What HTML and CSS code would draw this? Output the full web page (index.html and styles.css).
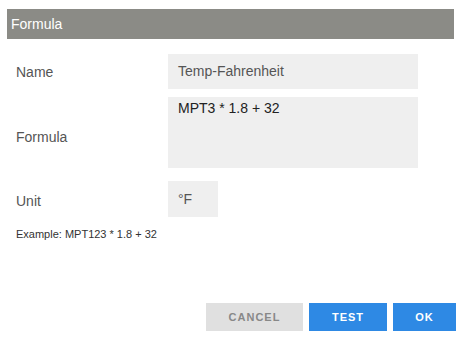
FILE: index.html
```html
<!DOCTYPE html>
<html>
<head>
<meta charset="utf-8">
<link rel="stylesheet" href="styles.css">
</head>
<body>
<div class="dialog">
  <div class="header">Formula</div>
  <div class="body">
    <div class="row row-name">
      <div class="label">Name</div>
      <div class="field field-name">Temp-Fahrenheit</div>
    </div>
    <div class="row row-formula">
      <div class="label label-formula">Formula</div>
      <div class="field field-formula">MPT3 * 1.8 + 32</div>
    </div>
    <div class="row row-unit">
      <div class="label label-unit">Unit</div>
      <div class="field field-unit">°F</div>
    </div>
    <div class="example">Example: MPT123 * 1.8 + 32</div>
  </div>
  <div class="actions">
    <button class="btn btn-cancel">CANCEL</button>
    <button class="btn btn-primary btn-test">TEST</button>
    <button class="btn btn-primary btn-ok">OK</button>
  </div>
</div>
</body>
</html>
```

FILE: styles.css
```css
* { box-sizing: border-box; }
html, body { margin: 0; padding: 0; background: #fff; }
body {
  font-family: "Liberation Sans", Arial, sans-serif;
  font-size: 14px;
  color: #555;
}
.dialog {
  margin: 9px 11px 0 7px;
  width: 447px;
}
.header {
  height: 30px;
  background: #8b8b86;
  color: #fff;
  font-size: 14px;
  line-height: 30px;
  padding-left: 4px;
}
.body {
  padding: 15px 0 0 9px;
}
.row {
  display: flex;
  align-items: center;
}
.label {
  width: 152px;
  color: #555;
}
.label-formula { padding-top: 9px; }
.label-unit { padding-top: 4px; }
.field {
  background: #efefef;
  color: #555;
  padding-left: 10px;
}
.field-name {
  width: 250px;
  height: 35px;
  line-height: 35px;
}
.row-formula { margin-top: 8px; }
.field-formula {
  width: 250px;
  height: 71px;
  color: #222;
  padding-top: 3px;
  line-height: 16px;
}
.row-unit { margin-top: 13px; }
.field-unit {
  width: 50px;
  height: 36px;
  line-height: 36px;
}
.example {
  margin-top: 11px;
  font-size: 11px;
  color: #333;
}
.actions {
  display: flex;
  justify-content: flex-end;
  gap: 6px;
  margin-top: 63px;
  margin-right: -2px;
}
.btn {
  border: none;
  height: 28px;
  font-family: "Liberation Sans", Arial, sans-serif;
  font-size: 11px;
  font-weight: bold;
  letter-spacing: 1px;
  padding: 0;
  cursor: pointer;
}
.btn-cancel {
  width: 97px;
  background: #e0e0e0;
  color: #888;
}
.btn-primary {
  background: #2e89e4;
  color: #fff;
}
.btn-test { width: 78px; }
.btn-ok { width: 63px; }
```
